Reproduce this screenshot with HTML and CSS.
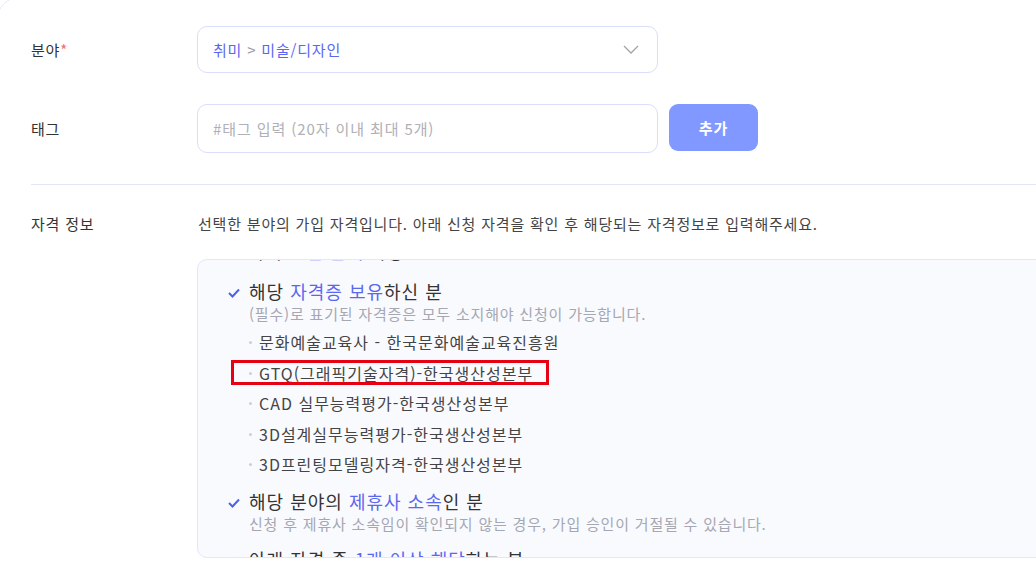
FILE: index.html
```html
<!DOCTYPE html>
<html lang="ko">

<head>
    <meta charset="UTF-8">
    <meta name="viewport" content="width=device-width, initial-scale=1.0">
    <title>분야 및 자격 정보</title>
    <link rel="stylesheet" href="styles.css">
</head>

<body>

    <div class="card">
        <div class="row">
            <div class="label">분야<span class="req">*</span></div>
            <div class="field">
                <div class="select">
                    <span class="path">취미 <span class="sep">&gt;</span> 미술/디자인</span>
                    <svg class="chevron" width="16" height="9" viewBox="0 0 16 9">
                        <path d="M1 1 L8 8 L15 1" fill="none" stroke="#a3a3a8" stroke-width="1.3" />
                    </svg>
                </div>
            </div>
        </div>

        <div class="row">
            <div class="label">태그</div>
            <div class="field tag-field">
                <input class="input" type="text" placeholder="#태그 입력 (20자 이내 최대 5개)">
                <button class="btn-add">추가</button>
            </div>
        </div>

        <hr class="divider">

        <div class="row row-top">
            <div class="label">자격 정보</div>
            <div class="field">
                <p class="desc">선택한 분야의 가입 자격입니다. 아래 신청 자격을 확인 후 해당되는 자격정보로 입력해주세요.</p>

                <!-- Qualification box (scrolled) -->
                <div class="qual-box">
                    <div class="qual-inner">
                        <p class="clipped">자격 <span class="hl">요건 안내</span> 사항</p>

                        <div class="qual">
                            <div class="qual-title">
                                <svg class="check" width="12" height="10" viewBox="0 0 12 10">
                                    <path d="M1 5 L4.5 8.5 L11 1.5" fill="none" stroke="#4b63e6" stroke-width="2" />
                                </svg>해당 <span class="hl">자격증 보유</span>하신 분
                            </div>
                            <p class="qual-sub">(필수)로 표기된 자격증은 모두 소지해야 신청이 가능합니다.</p>
                            <ul class="qual-list">
                                <li><span class="item">문화예술교육사 - 한국문화예술교육진흥원</span></li>
                                <li><span class="item marked">GTQ(그래픽기술자격)-한국생산성본부</span></li>
                                <li><span class="item">CAD 실무능력평가-한국생산성본부</span></li>
                                <li><span class="item">3D설계실무능력평가-한국생산성본부</span></li>
                                <li><span class="item">3D프린팅모델링자격-한국생산성본부</span></li>
                            </ul>
                        </div>

                        <div class="qual">
                            <div class="qual-title">
                                <svg class="check" width="12" height="10" viewBox="0 0 12 10">
                                    <path d="M1 5 L4.5 8.5 L11 1.5" fill="none" stroke="#4b63e6" stroke-width="2" />
                                </svg>해당 분야의 <span class="hl">제휴사 소속</span>인 분
                            </div>
                            <p class="qual-sub">신청 후 제휴사 소속임이 확인되지 않는 경우, 가입 승인이 거절될 수 있습니다.</p>
                        </div>

                        <div class="qual">
                            <div class="qual-title">
                                <svg class="check" width="12" height="10" viewBox="0 0 12 10">
                                    <path d="M1 5 L4.5 8.5 L11 1.5" fill="none" stroke="#4b63e6" stroke-width="2" />
                                </svg>아래 자격 중 <span class="hl">1개 이상 해당</span>하는 분
                            </div>
                        </div>
                    </div>
                </div>
            </div>
        </div>
    </div>

</body>

</html>
```

FILE: styles.css
```css
body {
    margin: 0;
    background-color: #ffffff;
    font-family: 'Noto Sans CJK KR', 'Noto Sans', sans-serif;
    color: #333333;
    letter-spacing: 0.8px;
    overflow: hidden;
}

.card {
    width: 1200px;
    height: 640px;
    margin: -3px 0 0 -3px;
    border: 1px solid #e8ebf7;
    border-radius: 22px;
    padding: 28px 0 0 33px;
    box-sizing: border-box;
}

.row {
    display: flex;
    align-items: center;
    margin-bottom: 31px;
}

.row-top {
    align-items: flex-start;
}

.label {
    width: 166px;
    flex-shrink: 0;
    font-size: 15px;
    color: #333333;
}

.req {
    color: #f26f6f;
}

.field {
    flex: 1;
}

.select {
    width: 461px;
    height: 47px;
    border: 1px solid #d8defc;
    border-radius: 10px;
    box-sizing: border-box;
    display: flex;
    align-items: center;
    justify-content: space-between;
    padding: 0 18px 0 15px;
    font-size: 15px;
}

.path {
    color: #5a68f0;
}

.sep {
    color: #9a9aa2;
}

.tag-field {
    display: flex;
    align-items: flex-start;
    gap: 11px;
}

.input {
    width: 461px;
    height: 49px;
    border: 1px solid #d8defc;
    border-radius: 10px;
    box-sizing: border-box;
    padding: 0 15px;
    font-family: inherit;
    font-size: 15px;
    letter-spacing: 0.9px;
    outline: none;
}

.input::placeholder {
    color: #b0b0b6;
}

.btn-add {
    width: 89px;
    height: 47px;
    border: none;
    border-radius: 9px;
    background-color: #8098ff;
    color: #ffffff;
    font-family: inherit;
    font-size: 15px;
    font-weight: bold;
    letter-spacing: 1px;
}

.divider {
    border: none;
    border-top: 1px solid #e3e8f8;
    margin: 0 0 28px 0;
}

.desc {
    margin: 0 0 25px 1px;
    font-size: 15px;
    color: #444444;
}

.qual-box {
    width: 900px;
    height: 299px;
    border: 1px solid #e3e8f8;
    border-radius: 10px;
    background-color: #f9fafe;
    box-sizing: border-box;
    overflow: hidden;
}

.qual-inner {
    margin-top: -21px;
    padding-left: 30px;
}

.clipped {
    margin: 0 0 16px 20px;
    font-size: 18px;
    line-height: 24px;
    color: #333333;
}

.qual {
    margin-bottom: 13px;
}

.qual-title {
    font-size: 18px;
    line-height: 24px;
    letter-spacing: 1px;
    color: #333333;
}

.check {
    margin-right: 9px;
    vertical-align: 1px;
}

.hl {
    color: #5a68f0;
}

.qual-sub {
    margin: 0 0 0 21px;
    font-size: 15px;
    line-height: 21px;
    color: #a5a7b2;
}

.qual-list {
    list-style: none;
    margin: 3px 0 -4px 21px;
    padding: 0;
}

.qual-list li {
    height: 30.5px;
    display: flex;
    align-items: center;
}

.item {
    position: relative;
    font-size: 16px;
    letter-spacing: 1px;
    color: #444444;
    padding-left: 10px;
}

.item::before {
    content: "";
    position: absolute;
    left: 0;
    top: 50%;
    width: 3px;
    height: 3px;
    margin-top: -1px;
    border-radius: 50%;
    background-color: #cfcfd4;
}

.marked::after {
    content: "";
    position: absolute;
    left: -18px;
    right: -16px;
    top: -1px;
    bottom: 0;
    border: 3px solid #e60012;
}
```
